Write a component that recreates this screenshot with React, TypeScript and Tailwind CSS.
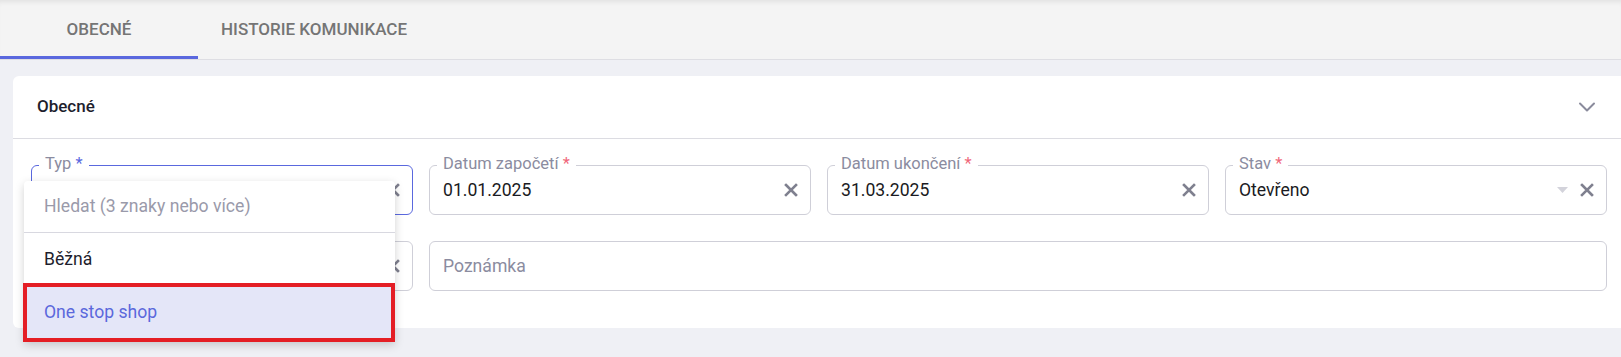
import { ChevronDown } from "lucide-react";

function ClearIcon() {
  return (
    <svg width="14" height="14" viewBox="0 0 14 14" aria-hidden="true">
      <path d="M2 2L12 12M12 2L2 12" stroke="#7f808f" strokeWidth="2.6" strokeLinecap="square" />
    </svg>
  );
}

function Field({
  label,
  value,
  placeholder,
  focused,
  arrow,
  clear = true,
}: {
  label?: string;
  value?: string;
  placeholder?: string;
  focused?: boolean;
  arrow?: boolean;
  clear?: boolean;
}) {
  return (
    <div
      className={`relative h-[50px] rounded-md border flex items-center pl-[13px] pr-[12px] ${
        focused ? "border-[#5a68de] border-[1.5px]" : "border-[#cfcfd8]"
      }`}
    >
      {label && (
        <span className="absolute -top-[13px] left-[7px] px-[6px] bg-white text-[16.5px] leading-[22px] text-[#8b8ca0]">
          {label}{" "}
          <span className={focused ? "text-[#5a68de]" : "text-[#f0677a]"}>*</span>
        </span>
      )}
      <span className={`flex-1 text-[17.6px] ${value ? "text-[#1a1a22]" : "text-[#8b8ca0]"}`}>
        {value ?? placeholder}
      </span>
      {arrow && (
        <svg width="11" height="6" viewBox="0 0 11 6" className="mr-[12px]" aria-hidden="true">
          <path d="M0 0h11L5.5 6z" fill="#d3d3db" />
        </svg>
      )}
      {clear && <ClearIcon />}
    </div>
  );
}

export default function App() {
  return (
    <div
      className="w-full h-[357px] overflow-hidden bg-[#eff0f5]"
      style={{ fontFamily: "Roboto, 'Liberation Sans', sans-serif" }}
    >
      <div className="h-[60px] flex bg-[#f4f4f4] border-b border-[#dedee3] shadow-[inset_0_5px_5px_-3px_rgba(0,0,0,0.08)]">
        <div className="w-[198px] flex items-center justify-center text-[17px] font-medium text-[#757575] border-b-[3px] border-[#5a68de] pt-[3px]">
          OBECNÉ
        </div>
        <div className="px-[23px] flex items-center text-[17px] font-medium text-[#757575]">
          HISTORIE KOMUNIKACE
        </div>
      </div>

      <div className="pl-[13px] pt-[16px]">
        <div className="bg-white rounded-md w-[1620px]">
          <div className="h-[63px] flex items-center justify-between pl-[24px] pr-[32px] border-b border-[#dcdce2]">
            <span className="text-[17px] font-medium text-[#1e1e2d]">Obecné</span>
            <ChevronDown size={28} strokeWidth={1.7} color="#8a8b9c" />
          </div>

          <div className="pl-[18px] pt-[26px] pb-[37px] w-[1594px]">
            <div className="grid grid-cols-4 gap-x-[16px] gap-y-[26px]">
              <div className="relative">
                <Field label="Typ" focused />
                <div className="absolute left-[-7px] top-[16px] w-[371px] bg-white rounded-t shadow-[0_3px_10px_rgba(0,0,0,0.18)] z-10">
                  <div className="h-[52px] flex items-center pl-[20px] text-[17.6px] text-[#9a9aaa] border-b border-[#d8d8e0]">
                    Hledat (3 znaky nebo více)
                  </div>
                  <div className="h-[50px] flex items-center pl-[20px] pt-[3px] text-[17.6px] text-[#1e1e2d]">
                    Běžná
                  </div>
                  <div className="h-[59px] -ml-px flex items-center pl-[17px] text-[17.6px] text-[#5b68dc] bg-[#e4e6f8] border-[4px] border-[#e41e25]">
                    One stop shop
                  </div>
                </div>
              </div>
              <Field label="Datum započetí" value="01.01.2025" />
              <Field label="Datum ukončení" value="31.03.2025" />
              <Field label="Stav" value="Otevřeno" arrow />

              <Field value="" />
              <div className="col-span-3">
                <Field placeholder="Poznámka" clear={false} />
              </div>
            </div>
          </div>
        </div>
      </div>
    </div>
  );
}
